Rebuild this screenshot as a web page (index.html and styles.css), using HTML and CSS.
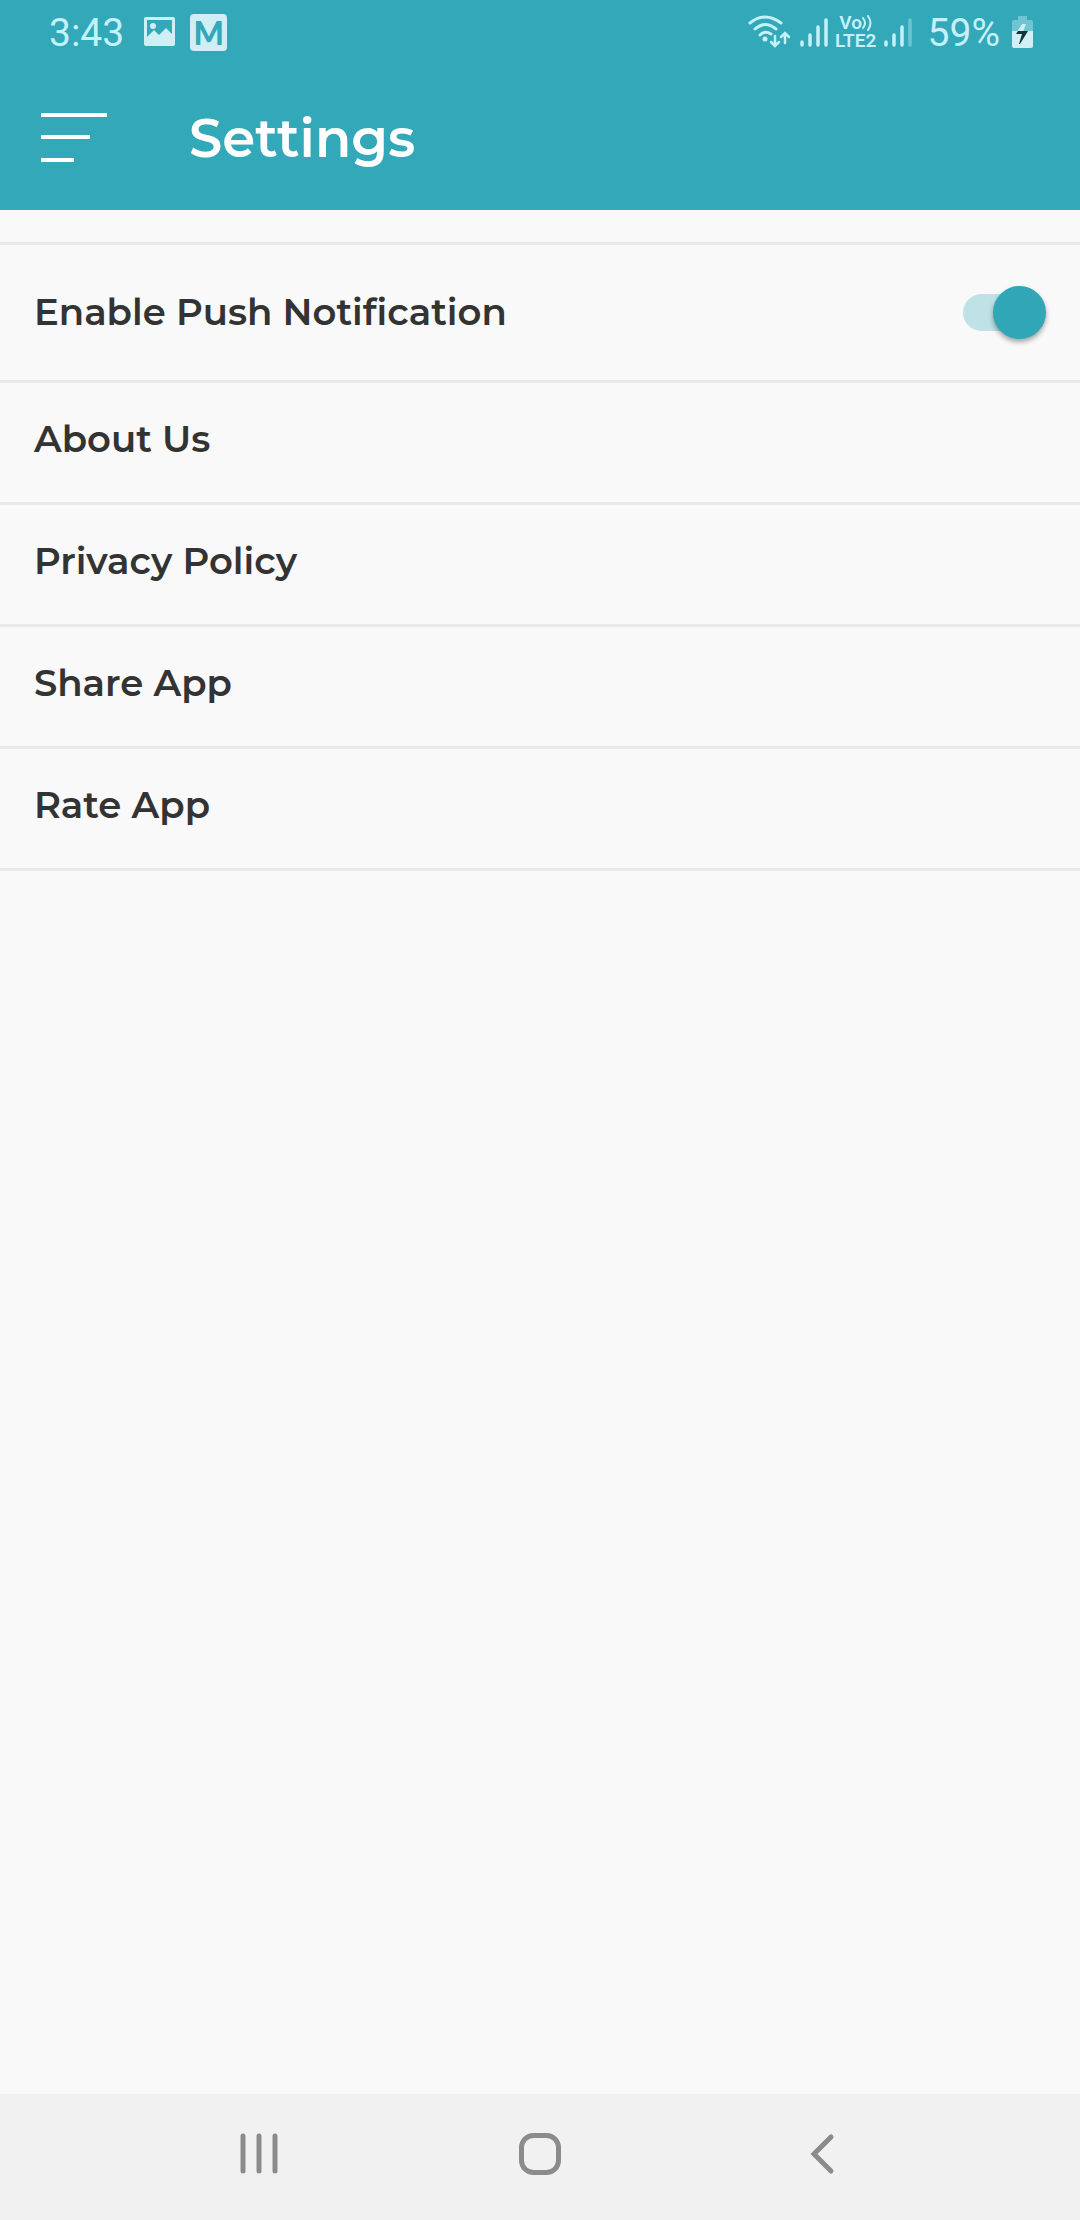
FILE: index.html
```html
<!DOCTYPE html>
<html lang="en">
<head>
<meta charset="utf-8">
<meta name="viewport" content="width=device-width, initial-scale=1">
<title>Settings</title>
<link rel="stylesheet" href="styles.css">
</head>
<body>
<div class="screen">
  <header class="header">
    <div class="status">
      <div class="status-group">
        <time class="status-text">3:43</time>
        <div class="notices">
          <svg class="icon" width="32" height="30" viewBox="0 0 32 30" aria-hidden="true"><path fill="#d0eff4" fill-rule="evenodd" d="M2 0H29Q31 0 31 2V27Q31 29 29 29H2Q0 29 0 27V2Q0 0 2 0ZM3 3V20L10 13L15 18L22 11L28 17V3ZM9 6A3 3 0 1 1 9 12A3 3 0 1 1 9 6Z"/></svg>
          <span class="app-badge">M</span>
        </div>
      </div>
      <div class="status-group status-right">
        <div class="radios">
          <svg class="icon" width="44" height="34" viewBox="0 0 44 34" aria-hidden="true">
            <g fill="none" stroke="currentColor" stroke-width="3" stroke-linecap="round">
              <path d="M2 8Q17 -4 33 8M7 14Q17 5 28 14M12 20Q17 15 23 19"/>
              <path stroke-width="2.5" d="M27 21V30M23 27L27 31L31 27M37 28V19M33 22L37 18L41 22"/>
            </g>
            <circle cx="17" cy="24" r="2.5" fill="currentColor"/>
          </svg>
          <svg class="icon" width="28" height="32" viewBox="0 0 28 32" aria-hidden="true"><g stroke="currentColor" stroke-width="3.5" stroke-linecap="round"><path d="M2 26V29M10 19V29M18 11V29M26 4V29"/></g></svg>
          <span class="volte"><span class="vo">Vo<svg width="10" height="16" viewBox="0 0 10 16" aria-hidden="true"><path fill="none" stroke="currentColor" stroke-width="2" stroke-linecap="round" d="M1 3Q5 8 1 13M6 1Q11 8 6 15"/></svg></span><span>LTE2</span></span>
          <svg class="icon" width="28" height="32" viewBox="0 0 28 32" aria-hidden="true"><g stroke="currentColor" stroke-width="3.5" stroke-linecap="round"><path d="M2 26V29M10 19V29M18 11V29"/><path d="M26 4V29" opacity=".4"/></g></svg>
        </div>
        <span class="status-text">59%</span>
        <svg class="battery" width="22" height="34" viewBox="0 0 22 34" aria-hidden="true"><path fill="#6fc5d1" d="M6 1H15V5H19Q21 5 21 7V17H0V7Q0 5 2 5H6Z"/><path fill="#d0eff4" d="M0 16H21V31Q21 33 19 33H2Q0 33 0 31Z"/><path fill="#d0eff4" d="M10 9H14L11 17H5Z"/><path fill="#16343b" d="M6 16H16L8 29H7L10 19H4Z"/></svg>
      </div>
    </div>
    <div class="appbar">
      <button class="menu" type="button" aria-label="Menu"><svg width="66" height="50" viewBox="0 0 66 50"><path fill="currentColor" d="M0 0H66V4H0ZM0 22H49V26H0ZM0 45H33V49H0Z"/></svg></button>
      <h1 class="title">Settings</h1>
    </div>
  </header>
  <main class="content">
    <ul class="settings">
      <li class="row row-switch"><label for="push">Enable Push Notification</label><input class="switch" id="push" type="checkbox" role="switch" checked></li>
      <li><a class="row" href="#about">About Us</a></li>
      <li><a class="row" href="#privacy">Privacy Policy</a></li>
      <li><a class="row" href="#share">Share App</a></li>
      <li><a class="row" href="#rate">Rate App</a></li>
    </ul>
  </main>
  <nav class="navbar" aria-label="System">
    <button type="button" aria-label="Recent apps"><svg width="42" height="42" viewBox="0 0 42 42"><path d="M5 3V38M21 3V38M37 3V38"/></svg></button>
    <button type="button" aria-label="Home"><svg width="42" height="42" viewBox="0 0 42 42"><rect x="2.5" y="2.5" width="37" height="37" rx="12"/></svg></button>
    <button type="button" aria-label="Back"><svg width="42" height="42" viewBox="0 0 42 42"><path d="M31 4L14 21L31 38"/></svg></button>
  </nav>
</div>
</body>
</html>
```
FILE: styles.css
```css
* {
  box-sizing: border-box;
}

body {
  margin: 0;
  background: #f9f9f9;
  color: #333;
  font-family: Montserrat, Inter, sans-serif;
}

button {
  display: flex;
  align-items: center;
  justify-content: center;
  padding: 0;
  border: 0;
  background: none;
  color: inherit;
}

svg {
  display: block;
  flex: none;
}

.screen {
  display: flex;
  flex-direction: column;
  min-height: 100vh;
}

.header {
  background: #32a8b9;
  color: #fff;
}

.status {
  display: flex;
  justify-content: space-between;
  height: 64px;
  padding: 0 46px 0 49px;
  color: #c5f1f8;
  font-family: Roboto, sans-serif;
}

.status-group {
  display: flex;
  align-items: center;
  gap: 20px;
}

.status-right {
  gap: 12px;
}

.notices {
  display: flex;
  align-items: center;
  gap: 14px;
}

.radios {
  display: flex;
  align-items: center;
  gap: 8px;
  padding-right: 4px;
}

.status-text {
  font-size: 39px;
  line-height: 64px;
  padding-top: 2px;
}

.app-badge {
  width: 37px;
  height: 37px;
  border-radius: 4px;
  background: #d0eff4;
  color: #32a8b9;
  font: 900 32px/37px Lato, sans-serif;
  text-align: center;
}

.volte {
  display: flex;
  flex-direction: column;
  align-items: center;
  width: 40px;
  font-size: 19px;
  font-weight: 600;
  line-height: 18px;
}

.vo {
  display: flex;
  align-items: center;
}

.appbar {
  display: flex;
  align-items: center;
  gap: 82px;
  height: 146px;
  padding: 2px 41px 0;
}

.title {
  margin: 0;
  font-size: 53px;
  font-weight: 600;
  line-height: 64px;
}

.content {
  flex: 1;
  padding-top: 32px;
}

.settings {
  margin: 0;
  padding: 0;
  list-style: none;
  border-top: 3px solid #e9e9e9;
}

.row {
  display: flex;
  align-items: center;
  justify-content: space-between;
  padding: 32px 34px 39px;
  border-bottom: 3px solid #e9e9e9;
  color: inherit;
  font-size: 37px;
  font-weight: 600;
  line-height: 48px;
  text-decoration: none;
}

.row-switch {
  padding: 41px 34px;
}

.row-switch label {
  padding-bottom: 2px;
}

.switch {
  appearance: none;
  display: flex;
  align-items: center;
  justify-content: flex-end;
  position: relative;
  width: 83px;
  height: 53px;
  margin: 0;
}

.switch::before {
  content: "";
  position: absolute;
  inset: 8px 8px 8px 0;
  border-radius: 19px;
  background: #bee2e6;
}

.switch::after {
  content: "";
  position: relative;
  width: 53px;
  height: 53px;
  border-radius: 50%;
  background: #30a6b6;
  box-shadow: 0 3px 5px rgba(0, 0, 0, 0.35);
}

.navbar {
  display: grid;
  grid-template-columns: repeat(3, 26%);
  justify-content: center;
  height: 126px;
  padding-bottom: 6px;
  background: #f1f1f1;
  color: #8b8b8b;
}

.navbar svg {
  fill: none;
  stroke: currentColor;
  stroke-width: 5;
  stroke-linecap: round;
}
```
